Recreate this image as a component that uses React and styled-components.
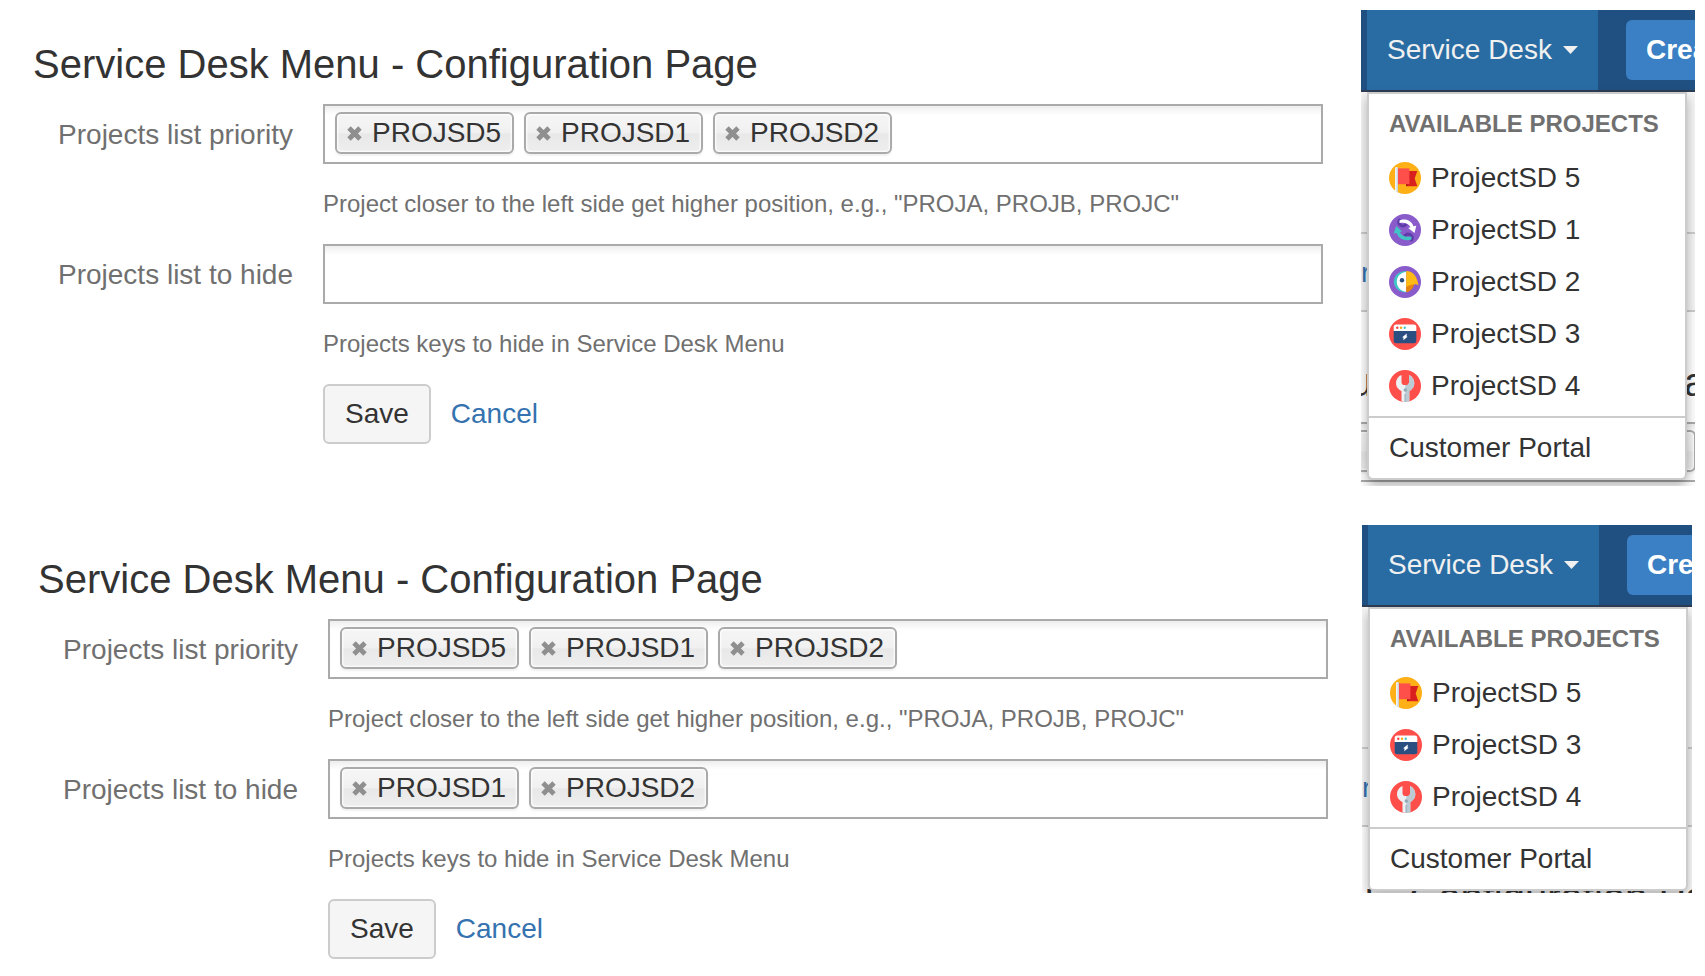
import React, { useState } from "react";
import styled, { createGlobalStyle } from "styled-components";

const icons = {
  flag: (
    <>
      <circle cx="16" cy="16" r="16" fill="#ffb017" />
      <path d="M17 9h11.3l-2.6 7.5 2.6 7.7H17z" fill="#d9201f" />
      <path d="M17 22.2h3.4l-3.4 2z" fill="#a91512" />
      <path d="M8.5 6.4h11.9v15.8H8.5z" fill="#ff4f4b" />
      <path d="M6 6.3a1.4 1.4 0 0 1 2.8 0v24l-2.8-1z" fill="#eef3f5" />
      <path d="M7.6 5v25l1.2.4V6.3C8.800 5.5 8.2 5 7.6 5z" fill="#c3d3dc" />
    </>
  ),
  cycle: (
    <>
      <circle cx="16" cy="16" r="16" fill="#8a5ccb" />
      <path
        d="M17 10.5c-1.500 1.500-3.500 1.700-5 1C9.500 10.300 8.800 7.800 10.500 6"
        fill="none"
        stroke="#5d3ca8"
        strokeWidth="3"
        strokeLinecap="round"
      />
      <path
        d="M16 21.500c1.500-1.500 3.500-1.700 5-1 2.500 1.200 3.200 3.700 1.500 5.500"
        fill="none"
        stroke="#5d3ca8"
        strokeWidth="3"
        strokeLinecap="round"
      />
      <path d="M10.500 6.600c3.500-2 11.300-1.600 14 5.700l2.800-.6-1.800 7.400-6.300-5.200 2.300-.6C19.800 9.500 15.500 8 10.500 9z" fill="#fff" />
      <path d="M22.500 25.200c-3.500 2-12 2-14.800-6.100l-3 .5L7.200 12l5.800 5.600-2.200.5c1.500 4 6.200 5.700 11.700 4.400z" fill="#41c4c5" />
    </>
  ),
  parrot: (
    <>
      <circle cx="16" cy="16" r="16" fill="#8a5ccb" />
      <path d="M17.200 5C10 5 4.800 9.500 4.800 15.700S10 26.300 17.200 26.300z" fill="#41c4c5" />
      <path d="M17.200 6C11.500 6.500 7.800 10.500 7.800 15.700s3.700 9.500 9.400 10z" fill="#fff" />
      <path d="M17.200 17h8.300c-.8 5-4.300 8.700-8.300 9.300z" fill="#e8850c" />
      <path d="M17.200 5c7 0 11.300 6 12.300 14.600-2-2-3.700-1.300-5.700-1-2.800.5-4.800 1-6.600 2.600z" fill="#ffba15" />
      <circle cx="13" cy="14.200" r="2.200" fill="#284d80" />
    </>
  ),
  browser: (
    <>
      <circle cx="16" cy="16" r="16" fill="#ff4f4b" />
      <path d="M4.700 9a2.500 2.500 0 0 1 2.500-2.500h17.600A2.500 2.500 0 0 1 27.300 9v4H4.700z" fill="#fff" />
      <path d="M4.700 13h22.600v9.700a2.500 2.500 0 0 1-2.500 2.500H7.200a2.500 2.500 0 0 1-2.500-2.500z" fill="#2b4f81" />
      <circle cx="8.300" cy="9.700" r="1.200" fill="#f0433f" />
      <circle cx="12" cy="9.700" r="1.200" fill="#f7a51a" />
      <circle cx="15.700" cy="9.700" r="1.200" fill="#41c4c5" />
      <path d="M17.800 15.600l-.2 2.800 1 .3-4.400 3.500.4-2.500-1.400-.5z" fill="#fff" />
    </>
  ),
  wrench: (
    <>
      <circle cx="16" cy="16" r="16" fill="#ff4f4b" />
      <path d="M12.500 5C9 6.300 7 9.500 7 13c0 4 2.600 6.500 5.500 8v10.600q3.700.7 7.800 0V21c2.700-1.500 5-4 5-8 0-3.500-2-6.700-5.300-8v8l-1.500 2h-4.500l-1.500-2z" fill="#ecf0f2" />
      <path d="M20 5v8l-1.500 2h-2.300v16.900q2 0 4.100-.4V21c2.700-1.500 5-4 5-8 0-3.500-2-6.700-5.300-8z" fill="#bccbd4" />
      <circle cx="16.300" cy="20" r="1.800" fill="#97abb7" />
      <path d="M15.400 24h1.800v8h-1.800z" fill="#a9bac5" />
    </>
  ),
};

const projects = {
  5: { name: "ProjectSD 5", icon: "flag" },
  1: { name: "ProjectSD 1", icon: "cycle" },
  2: { name: "ProjectSD 2", icon: "parrot" },
  3: { name: "ProjectSD 3", icon: "browser" },
  4: { name: "ProjectSD 4", icon: "wrench" },
};

const ChipItem = ({ name, onRemove }) => (
  <Chip>
    <RemoveButton type="button" aria-label={`Remove ${name}`} onClick={onRemove}>
      <svg width="15" height="15" viewBox="0 0 15 15">
        <path d="M2 2l11 11M13 2L2 13" stroke="#8f8f8f" strokeWidth="4.800" />
      </svg>
    </RemoveButton>
    {name}
  </Chip>
);

const ProjectPicker = ({ id, label, help, initial }) => {
  const [keys, setKeys] = useState(initial);

  const removeKey = (key) => {
    setKeys((prev) => prev.filter((k) => k !== key));
  };

  return (
    <FormRow>
      <Label htmlFor={id}>{label}</Label>
      <div>
        <Field>
          {keys.map((key) => (
            <ChipItem key={key} name={key} onRemove={() => removeKey(key)} />
          ))}
          <FieldInput id={id} type="text" />
        </Field>
        <Help>{help}</Help>
      </div>
    </FormRow>
  );
};

const ConfigForm = ({ id, priority, hidden }) => (
  <Form onSubmit={(e) => e.preventDefault()}>
    <Title>Service Desk Menu - Configuration Page</Title>
    <ProjectPicker
      id={`${id}-priority`}
      label="Projects list priority"
      help={'Project closer to the left side get higher position, e.g., "PROJA, PROJB, PROJC"'}
      initial={priority}
    />
    <ProjectPicker
      id={`${id}-hide`}
      label="Projects list to hide"
      help="Projects keys to hide in Service Desk Menu"
      initial={hidden}
    />
    <Actions>
      <SaveButton type="submit">Save</SaveButton>
      <Link href="#">Cancel</Link>
    </Actions>
  </Form>
);

const MenuPreview = ({ ids, width, height }) => (
  <Preview $width={width} $height={height}>
    <NavBar>
      <NavItem type="button">
        Service Desk
        <svg width="15" height="8" viewBox="0 0 15 8">
          <path d="M0 0h15L7.500 8z" fill="#f0f0f0" />
        </svg>
      </NavItem>
      <CreateButton type="button">Create</CreateButton>
    </NavBar>

    {/* the page that stays under the opened menu */}
    <Behind aria-hidden="true">
      <BehindHeader />
      <BehindTabs>r</BehindTabs>
      <BehindTitle as="div">Service Desk Menu - Configuration Page</BehindTitle>
      <BehindField>
        <Chip />
        <Chip />
      </BehindField>
    </Behind>

    <Menu>
      <MenuTitle>AVAILABLE PROJECTS</MenuTitle>
      <MenuList>
        {ids.map((id) => (
          <li key={id}>
            <MenuLink href="#">
              <svg width="32" height="32" viewBox="0 0 32 32">
                {icons[projects[id].icon]}
              </svg>
              {projects[id].name}
            </MenuLink>
          </li>
        ))}
      </MenuList>
      <MenuFooter>
        <MenuLink href="#">Customer Portal</MenuLink>
      </MenuFooter>
    </Menu>
  </Preview>
);

const App = () => (
  <>
    <GlobalStyle />
    <Page>
      <Section $left="33px" $right="10px" $gap="38px">
        <ConfigForm id="first" priority={["PROJSD5", "PROJSD1", "PROJSD2"]} hidden={[]} />
        <MenuPreview ids={[5, 1, 2, 3, 4]} width="334px" height="476px" />
      </Section>
      <Section $left="38px" $right="13px" $gap="34px">
        <ConfigForm
          id="second"
          priority={["PROJSD5", "PROJSD1", "PROJSD2"]}
          hidden={["PROJSD1", "PROJSD2"]}
        />
        <MenuPreview ids={[5, 3, 4]} width="330px" height="368px" />
      </Section>
    </Page>
  </>
);
export default App;

const GlobalStyle = createGlobalStyle`
  * {
    box-sizing: border-box;
  }
  body {
    margin: 0;
    background: #fff;
    color: #333;
    font-family: "Liberation Sans", Arial, sans-serif;
    font-size: 28px;
  }
  button,
  input {
    font: inherit;
    color: inherit;
  }
  svg {
    display: block;
    flex: none;
  }
`;
const Page = styled.main`
  display: flex;
  flex-direction: column;
  gap: 39px;
  padding: 10px 0 16px;
`;
const Section = styled.section`
  display: flex;
  align-items: flex-start;
  gap: ${(p) => p.$gap};
  padding-left: ${(p) => p.$left};
  padding-right: ${(p) => p.$right};
`;
const Form = styled.form`
  flex: 1;
  min-width: 0;
  padding-top: 30px;
`;
const Title = styled.h1`
  margin: 0 0 16px;
  font-size: 40px;
  font-weight: normal;
  line-height: 48px;
`;
const FormRow = styled.div`
  display: grid;
  grid-template-columns: 260px 1fr;
  column-gap: 30px;
  margin-bottom: 26px;
`;
const Label = styled.label`
  color: #707070;
  line-height: 62px;
  text-align: right;
`;
const Field = styled.div`
  display: flex;
  gap: 10px;
  height: 60px;
  padding: 6px 10px;
  border: 2px solid #aaa;
  background: linear-gradient(#eee, #fff 9px);
`;
const FieldInput = styled.input`
  flex: 1;
  min-width: 0;
  height: 42px;
  padding: 0;
  border: none;
  outline: none;
  background: transparent;
`;
const Chip = styled.span`
  display: flex;
  flex: none;
  gap: 10px;
  min-width: 179px;
  height: 42px;
  padding: 0 10px;
  border: 2px solid #aaa;
  border-radius: 6px;
  background: linear-gradient(#f4f4f4 20%, #f0f0f0 50%, #e8e8e8 52%, #eee);
  box-shadow: inset 0 0 2px 1px #fff, 0 2px 2px rgba(0, 0, 0, 0.06);
  line-height: 37px;
`;
const RemoveButton = styled.button`
  display: flex;
  align-items: center;
  height: 38px;
  padding: 0;
  border: none;
  background: none;
  cursor: pointer;
`;
const Help = styled.p`
  margin: 26px 0 0;
  color: #707070;
  font-size: 24px;
  line-height: 28px;
`;
const Actions = styled.div`
  display: flex;
  align-items: center;
  gap: 20px;
  padding-left: 290px;
`;
const SaveButton = styled.button`
  height: 60px;
  padding: 0 20px;
  border: 2px solid #ccc;
  border-radius: 6px;
  background: #f5f5f5;
  cursor: pointer;
`;
const Link = styled.a`
  color: #3572b0;
  text-decoration: none;
  &:hover {
    text-decoration: underline;
  }
`;

const Preview = styled.div`
  position: relative;
  flex: none;
  width: ${(p) => p.$width};
  height: ${(p) => p.$height};
  overflow: hidden;
`;
const NavBar = styled.nav`
  display: flex;
  align-items: center;
  gap: 28px;
  height: 82px;
  padding-left: 6px;
  border-bottom: 2px solid #2e3d54;
  background: #205081;
`;
const NavItem = styled.button`
  display: flex;
  flex: none;
  align-items: center;
  gap: 11px;
  height: 80px;
  padding: 0 20px;
  border: none;
  background: #296ca3;
  color: #f0f0f0;
  cursor: pointer;
`;
const CreateButton = styled.button`
  flex: none;
  height: 60px;
  padding: 0 20px;
  border: none;
  border-radius: 6px;
  background: #3b7fc4;
  color: #fff;
  font-weight: bold;
  cursor: pointer;
`;
const Behind = styled.div`
  white-space: nowrap;
`;
const BehindHeader = styled.div`
  height: 142px;
  border-bottom: 2px solid #ccc;
  background: #f5f5f5;
`;
const BehindTabs = styled.div`
  height: 78px;
  border-bottom: 2px solid #ccc;
  background: #f5f5f5;
  color: #3572b0;
  line-height: 78px;
`;
const BehindTitle = styled(Title)`
  margin-top: 46px;
  margin-left: -335px;
`;
const BehindField = styled(Field)`
  margin: 0 -600px 0 -45px;
`;
const Menu = styled.div`
  position: absolute;
  top: 82px;
  left: 6px;
  width: 320px;
  border: 2px solid #ccc;
  border-radius: 0 0 6px 6px;
  background: #fff;
  box-shadow: 0 6px 12px rgba(0, 0, 0, 0.3);
`;
const MenuTitle = styled.h2`
  margin: 0;
  padding: 16px 20px 14px;
  color: #707070;
  font-size: 24px;
  line-height: 28px;
  white-space: nowrap;
`;
const MenuList = styled.ul`
  margin: 0;
  padding: 0 0 4px;
  list-style: none;
`;
const MenuLink = styled.a`
  display: flex;
  align-items: center;
  gap: 10px;
  height: 52px;
  padding: 0 20px;
  color: #333;
  text-decoration: none;
  &:hover {
    background: #f5f5f5;
  }
`;
const MenuFooter = styled.div`
  padding: 4px 0;
  border-top: 2px solid #ccc;
`;
